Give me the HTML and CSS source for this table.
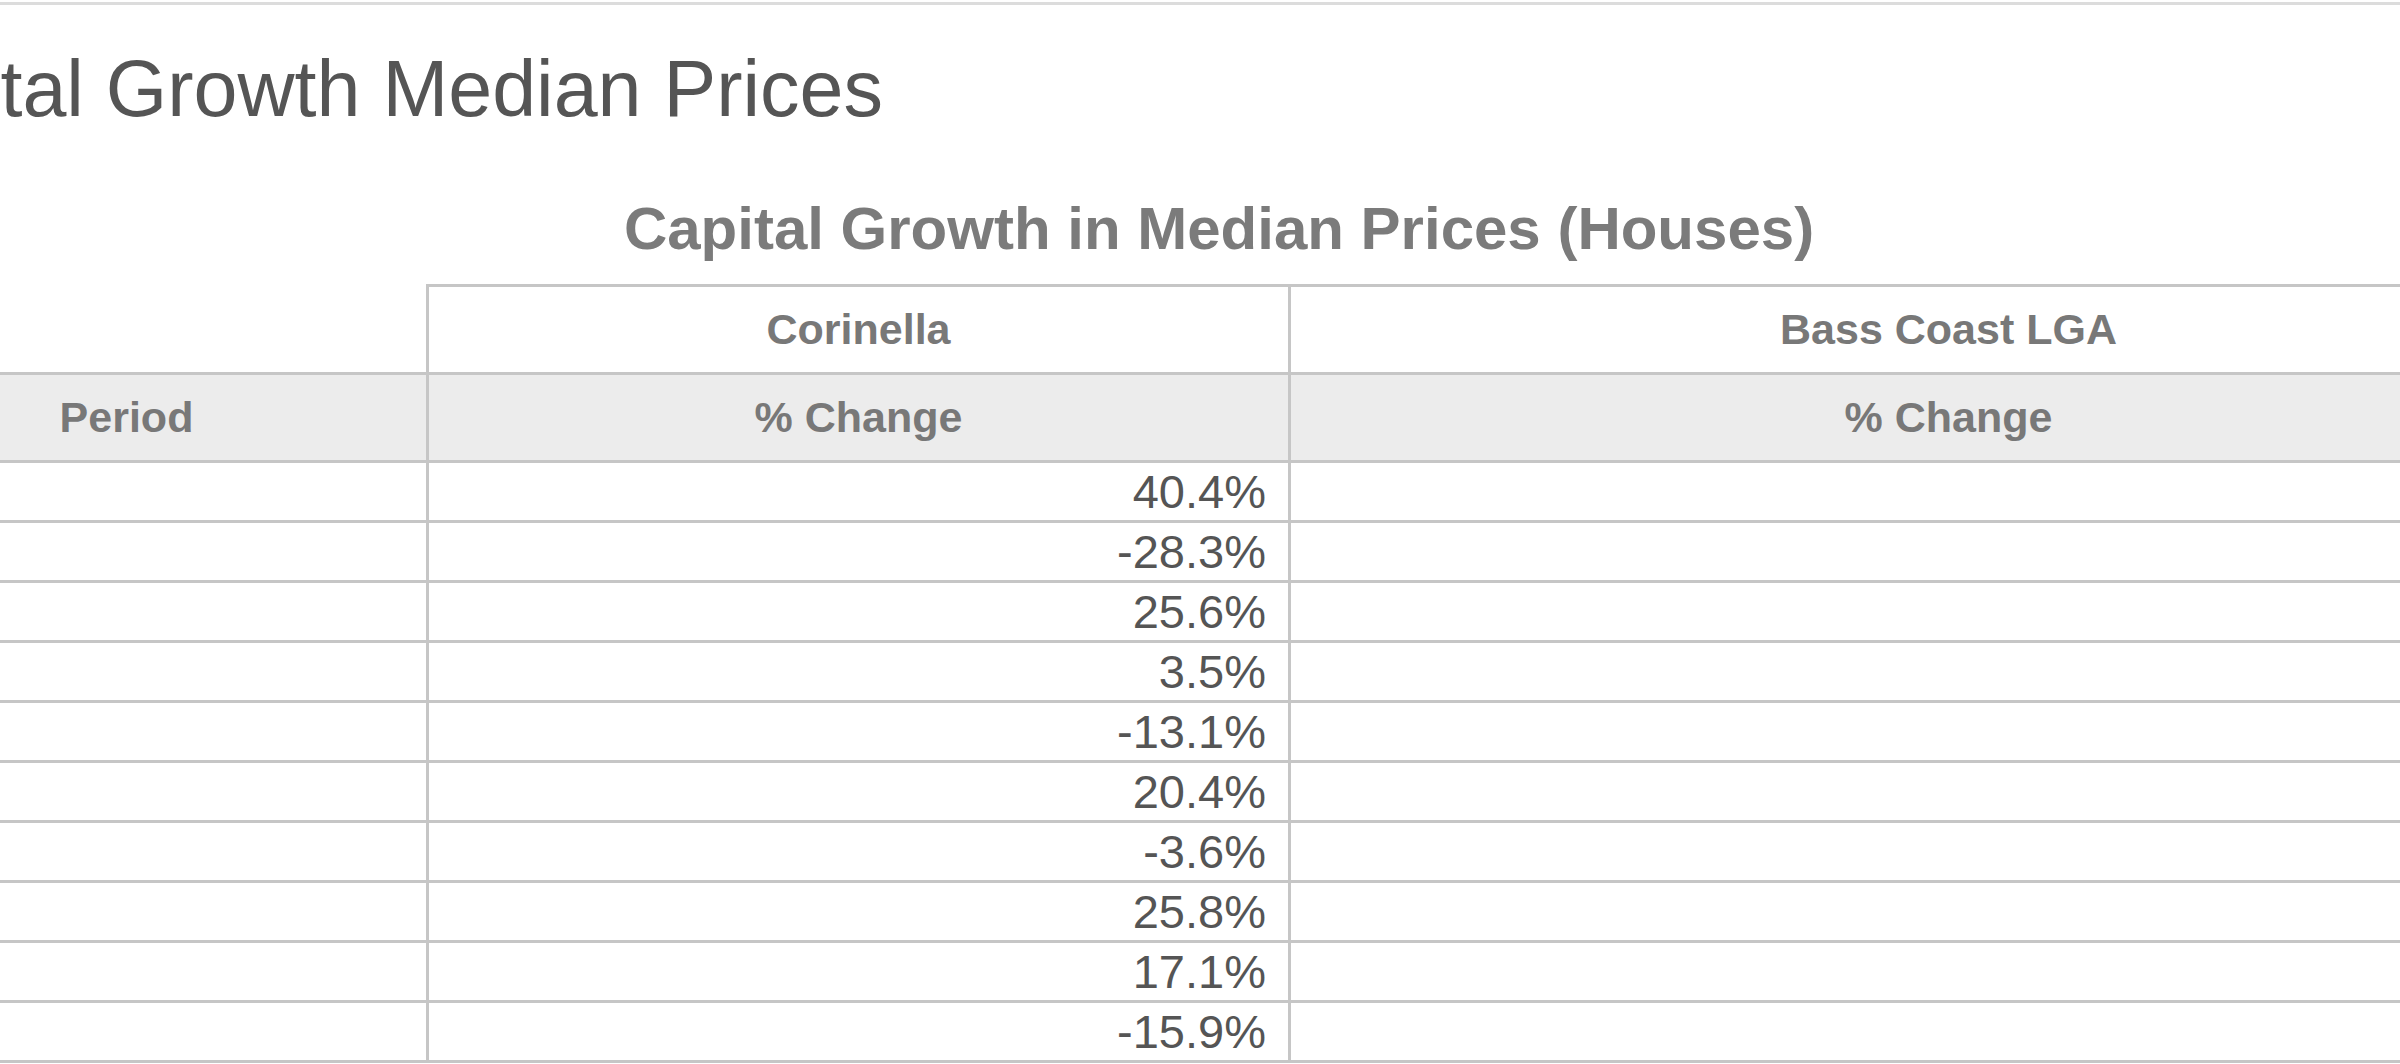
FILE: index.html
```html
<!DOCTYPE html>
<html lang="en">
<head>
<meta charset="utf-8">
<title>Capital Growth Median Prices</title>
<link rel="stylesheet" href="styles.css">
</head>
<body>
<div class="topbar"></div>
<div class="page">
  <h2 class="page-title">Capital Growth Median Prices</h2>
  <h3 class="table-title">Capital Growth in Median Prices (Houses)</h3>
  <table class="growth">
    <colgroup>
      <col class="c-period">
      <col class="c-sub">
      <col class="c-lga">
    </colgroup>
    <thead>
      <tr class="group-row">
        <th class="blank"></th>
        <th class="grp">Corinella</th>
        <th class="grp last">Bass Coast LGA</th>
      </tr>
      <tr class="label-row">
        <th>Period</th>
        <th>% Change</th>
        <th class="last">% Change</th>
      </tr>
    </thead>
    <tbody>
      <tr><td></td><td class="num">40.4%</td><td class="last"></td></tr>
      <tr><td></td><td class="num">-28.3%</td><td class="last"></td></tr>
      <tr><td></td><td class="num">25.6%</td><td class="last"></td></tr>
      <tr><td></td><td class="num">3.5%</td><td class="last"></td></tr>
      <tr><td></td><td class="num">-13.1%</td><td class="last"></td></tr>
      <tr><td></td><td class="num">20.4%</td><td class="last"></td></tr>
      <tr><td></td><td class="num">-3.6%</td><td class="last"></td></tr>
      <tr><td></td><td class="num">25.8%</td><td class="last"></td></tr>
      <tr><td></td><td class="num">17.1%</td><td class="last"></td></tr>
      <tr><td></td><td class="num">-15.9%</td><td class="last"></td></tr>
    </tbody>
  </table>
</div>
</body>
</html>
```

FILE: styles.css
```css
html, body {
  margin: 0;
  padding: 0;
  background: #ffffff;
  overflow: hidden;
}

body {
  font-family: "Liberation Sans", Arial, sans-serif;
  color: #555555;
}

.topbar {
  height: 3px;
  margin-top: 2px;
  background: #dcdcdc;
}

.page {
  width: 2779px;
  margin-left: -173px;
}

.page-title {
  margin: 44px 0 0 11px;
  font-size: 79px;
  line-height: 80px;
  font-weight: normal;
  color: #555555;
}

.table-title {
  margin: 70px 0 0 0;
  padding-left: 5px;
  font-size: 60px;
  line-height: 59px;
  font-weight: bold;
  color: #7b7b7b;
  text-align: center;
}

.growth {
  margin-top: 26px;
  width: 2779px;
  table-layout: fixed;
  border-collapse: separate;
  border-spacing: 0;
}

.c-period { width: 602px; }
.c-sub { width: 862px; }
.c-lga { width: 1315px; }

.growth th,
.growth td {
  padding: 0;
  border-bottom: 3px solid #c6c6c6;
  border-right: 3px solid #c6c6c6;
}

.growth .last {
  border-right: none;
}

.growth th {
  font-size: 43px;
  font-weight: bold;
  color: #787878;
  text-align: center;
  vertical-align: middle;
}

.group-row th {
  height: 85px;
  line-height: 85px;
  background: #ffffff;
}

.group-row .grp {
  border-top: 3px solid #c6c6c6;
}

.group-row .blank {
  border-right: 3px solid #c6c6c6;
}

.label-row th {
  height: 85px;
  line-height: 85px;
  background: #ececec;
}

.growth td {
  height: 57px;
  line-height: 57px;
  font-size: 47px;
  color: #555555;
  vertical-align: middle;
}

.growth td.num {
  text-align: right;
  padding-right: 22px;
}
```
